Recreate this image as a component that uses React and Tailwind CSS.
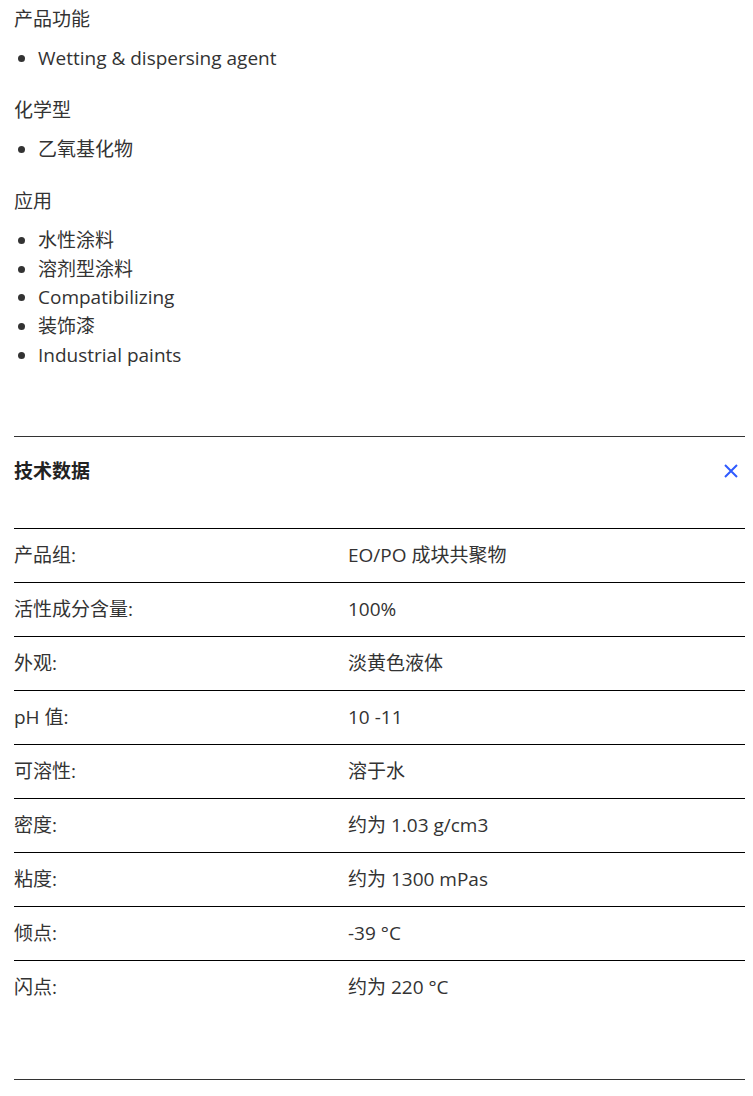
const sections = [
  { title: '产品功能', items: ['Wetting & dispersing agent'] },
  { title: '化学型', items: ['乙氧基化物'] },
  { title: '应用', items: ['水性涂料', '溶剂型涂料', 'Compatibilizing', '装饰漆', 'Industrial paints'] },
];

const specs = [
  ['产品组:', 'EO/PO 成块共聚物'],
  ['活性成分含量:', '100%'],
  ['外观:', '淡黄色液体'],
  ['pH 值:', '10 -11'],
  ['可溶性:', '溶于水'],
  ['密度:', '约为 1.03 g/cm3'],
  ['粘度:', '约为 1300 mPas'],
  ['倾点:', '-39 °C'],
  ['闪点:', '约为 220 °C'],
];

const font = { fontFamily: '"Open Sans", "Noto Sans CJK SC", sans-serif' };

export default function App() {
  return (
    <div className="bg-white text-[#333] pl-[14px] pr-[8px] pt-[5px]" style={font}>
      {sections.map((s) => (
        <div key={s.title} className="mb-[23.5px]">
          <p className="text-[19px] leading-[28.8px] mb-[10px]">{s.title}</p>
          <ul className="list-disc pl-[24px] text-[19px] leading-[28.75px]">
            {s.items.map((it) => (
              <li key={it}>{it}</li>
            ))}
          </ul>
        </div>
      ))}

      {/* tech data panel */}
      <div className="mt-[66px] border-t border-[#333]">
        <div className="flex items-center justify-between pt-[22px] pb-[45px]">
          <h3 className="text-[19px] leading-[24px] font-bold text-[#222]">技术数据</h3>
          <svg width="16" height="16" viewBox="0 0 16 16" className="mr-[6px]">
            <path d="M2 2 L14 14 M14 2 L2 14" stroke="#2f5bff" strokeWidth="2" fill="none" />
          </svg>
        </div>
        <div className="border-t border-black">
          {specs.map(([k, v], i) => (
            <div
              key={k}
              className={
                'grid grid-cols-[334px_1fr] items-center h-[54px] text-[19px] ' +
                (i < specs.length - 1 ? 'border-b border-black' : '')
              }
            >
              <span>{k}</span>
              <span>{v}</span>
            </div>
          ))}
        </div>
        <div className="h-[64px]" />
        <div className="border-t border-[#333]" />
      </div>
    </div>
  );
}
